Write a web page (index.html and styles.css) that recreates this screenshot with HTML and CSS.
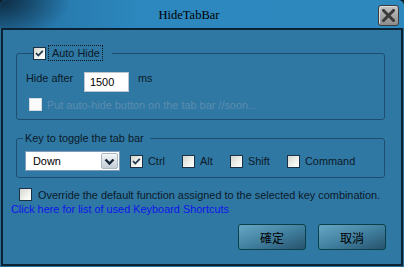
FILE: index.html
```html
<!DOCTYPE html>
<html>
<head>
<meta charset="utf-8">
<link rel="stylesheet" href="styles.css">
</head>
<body>
<div class="window">
  <div class="titlebar">
    <div class="title">HideTabBar</div>
    <div class="close">
      <svg width="13" height="13" viewBox="0 0 13 13"><path d="M1.5 1.5 L11.5 11.5 M11.5 1.5 L1.5 11.5" stroke="#3a3a3a" stroke-width="3" stroke-linecap="square"/></svg>
    </div>
  </div>
  <div class="client">
    <fieldset class="group g1">
      <legend class="legend1">
        <span class="cb"><svg width="11" height="11" viewBox="0 0 11 11"><polyline points="2,5 4.3,7.5 8.8,2.8" fill="none" stroke="#22384f" stroke-width="1.8"/></svg></span>
        <span class="focus">Auto Hide</span>
      </legend>
      <div class="hide-row">
        <span class="hide-lbl">Hide after</span>
        <span class="edit">1500</span>
        <span class="ms">ms</span>
      </div>
      <div class="dis-row">
        <span class="cb cb-dis"></span>
        <span>Put auto-hide button on the tab bar //soon...</span>
      </div>
    </fieldset>
    <fieldset class="group g2">
      <legend class="legend2">Key to toggle the tab bar</legend>
      <div class="keys-row">
        <div class="combo">
          <span class="combo-text">Down</span>
          <span class="combo-btn"><svg width="15" height="15" viewBox="0 0 15 15"><polyline points="3.5,5.5 7.5,9.5 11.5,5.5" fill="none" stroke="#16283a" stroke-width="2.4"/></svg></span>
        </div>
        <div class="item w-ctrl"><span class="cb"><svg width="11" height="11" viewBox="0 0 11 11"><polyline points="2,5 4.3,7.5 8.8,2.8" fill="none" stroke="#22384f" stroke-width="1.8"/></svg></span><span>Ctrl</span></div>
        <div class="item w-alt"><span class="cb"></span><span>Alt</span></div>
        <div class="item w-shift"><span class="cb"></span><span>Shift</span></div>
        <div class="item"><span class="cb"></span><span>Command</span></div>
      </div>
    </fieldset>
    <div class="override">
      <span class="cb"></span>
      <span>Override the default function assigned to the selected key combination.</span>
    </div>
    <a class="link">Click here for list of used Keyboard Shortcuts</a>
    <div class="buttons">
      <div class="btn">確定</div>
      <div class="btn">取消</div>
    </div>
  </div>
</div>
</body>
</html>
```
FILE: styles.css
```css
* { box-sizing: border-box; }
body {
  margin: 0;
  background: #0d1f2c;
  font-family: "Liberation Sans", Arial, sans-serif;
  font-size: 10.9px;
  color: #0c1a28;
}
.window {
  width: 404px;
  height: 267px;
  background: #2c6f99;
  border-radius: 6px 6px 0 0;
  overflow: hidden;
  display: flex;
  flex-direction: column;
}
.titlebar {
  height: 28px;
  flex: none;
  display: flex;
  align-items: flex-start;
  background:
    radial-gradient(ellipse 70px 40px at 0 0, rgba(8,30,48,0.85), rgba(8,30,48,0) 100%),
    linear-gradient(90deg, #2470a2 0, #2c88be 35%, #2d88be 100%);
}
.title {
  flex: 1;
  text-align: center;
  font-family: "Liberation Serif", "Times New Roman", serif;
  font-size: 12.5px;
  line-height: 14px;
  padding-top: 8px;
  color: #000;
}
.close {
  width: 21px;
  height: 21px;
  margin: 5px 5px 0 0;
  border: 1px solid #3c3c3c;
  border-radius: 3px;
  background: linear-gradient(#c2c2c2, #8c8c8c);
  box-shadow: inset 1px 1px 0 #dedede;
  display: flex;
  align-items: center;
  justify-content: center;
}
.client {
  flex: 1;
  margin: 0 1px 1px;
  border: 2px solid #0b2232;
  background: #2f78a4;
  display: flex;
  flex-direction: column;
  align-items: flex-start;
}
.group {
  margin: 0 0 0 13px;
  padding: 0;
  width: 369px;
  min-inline-size: 0;
  border: 1px solid #1d4e70;
  border-radius: 3px;
}
.g1 { margin-top: 15px; }
.g2 { margin-top: 11px; }
.legend1 {
  margin-left: 16px;
  padding: 0 9px 0 0;
  height: 16px;
  display: flex;
  align-items: center;
}
.cb {
  width: 13px;
  height: 13px;
  flex: none;
  border: 1px solid #1b3246;
  background: linear-gradient(135deg, #d6d6d0 0%, #f2f2ee 60%, #ffffff 100%);
  display: flex;
  align-items: center;
  justify-content: center;
}
.cb-dis {
  border-color: #d4dce2;
  background: #fbfbfb;
}
.focus {
  margin-left: 2px;
  height: 16px;
  line-height: 14px;
  padding: 0 2px 0 3px;
  border: 1px dotted #0a1620;
}
.hide-row {
  margin: 10px 0 0 9px;
  display: flex;
  align-items: flex-start;
  line-height: 14px;
}
.hide-lbl { width: 58px; }
.edit {
  width: 45px;
  height: 20px;
  margin-top: 1px;
  background: #fff;
  border: 1px solid #b9c6d0;
  padding-left: 5px;
  line-height: 18px;
  color: #000;
}
.ms { margin-left: 9px; }
.dis-row {
  margin: 6px 0 8px 12px;
  height: 13px;
  display: flex;
  align-items: center;
  gap: 5px;
  color: #5a8cae;
}
.legend2 {
  margin-left: 6px;
  padding: 0 6px 0 2px;
  line-height: 14px;
  height: 14px;
}
.keys-row {
  margin: 6px 0 6px 8px;
  display: flex;
  align-items: center;
}
.combo {
  width: 95px;
  height: 20px;
  background: #fff;
  border: 1px solid #7f9db9;
  display: flex;
  align-items: center;
  justify-content: space-between;
  padding: 1px;
}
.combo-text { padding-left: 6px; color: #000; }
.combo-btn {
  width: 17px;
  height: 16px;
  border: 1px solid #aab8c6;
  border-radius: 2px;
  background: linear-gradient(#f4f6f8, #c4ccd4);
  display: flex;
  align-items: center;
  justify-content: center;
}
.item {
  display: flex;
  align-items: center;
  gap: 5px;
}
.w-ctrl { width: 52px; margin-left: 10px; }
.w-alt { width: 48px; }
.w-shift { width: 57px; }
.override {
  margin: 10px 0 0 16px;
  height: 13px;
  display: flex;
  align-items: center;
  gap: 6px;
}
.link {
  margin: 1px 0 0 8px;
  line-height: 14px;
  color: #0f14e8;
}
.buttons {
  align-self: flex-end;
  margin: 8px 15px 0 0;
  display: flex;
  gap: 12px;
}
.btn {
  width: 68px;
  height: 26px;
  border: 1px solid #0a4048;
  border-radius: 3px;
  background: linear-gradient(160deg, #67a8c6 0%, #3f7d9c 55%, #27526d 100%);
  display: flex;
  align-items: center;
  justify-content: center;
  font-family: "Noto Sans CJK TC", "Noto Sans CJK SC", sans-serif;
  font-size: 12px;
  color: #000;
}
```
